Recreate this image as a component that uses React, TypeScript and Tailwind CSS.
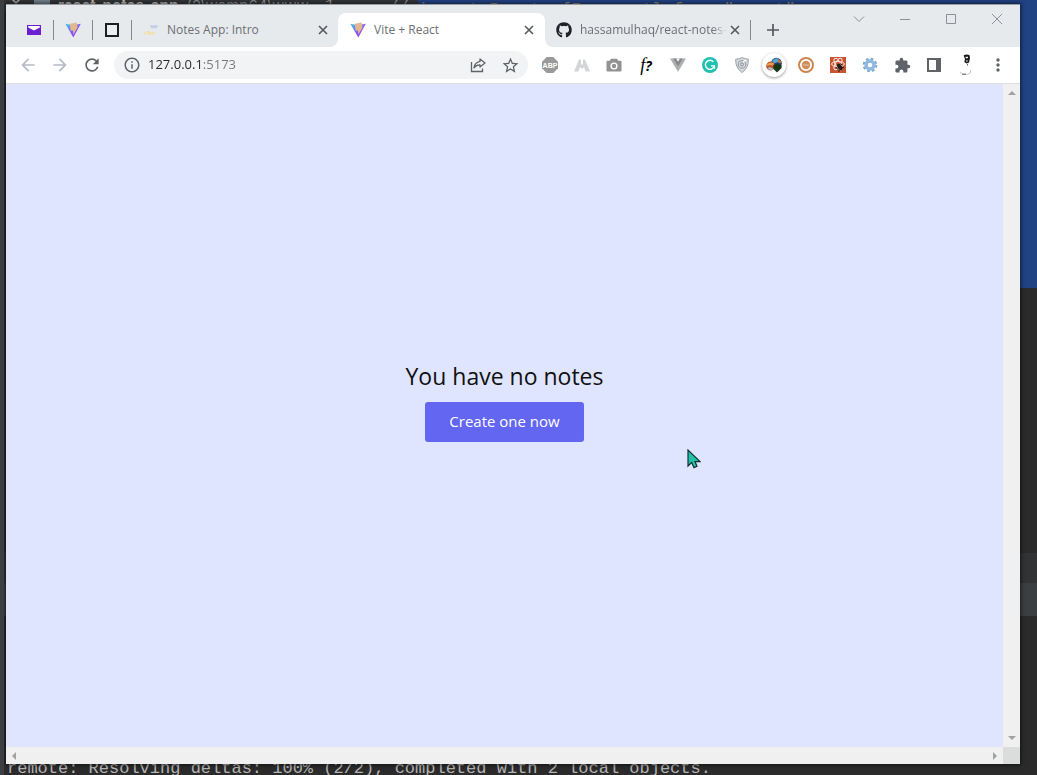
import type { ReactNode } from "react";
import { FaGithub } from "react-icons/fa";
import { MdExtension, MdMoreVert, MdRefresh, MdArrowBack, MdArrowForward, MdInfoOutline, MdStarBorder } from "react-icons/md";

function ViteLogo() {
  return (
    <svg viewBox="0 0 16 16" className="size-4 shrink-0" aria-hidden="true">
      <defs>
        <linearGradient id="viteBody" x1="0" y1="0" x2="1" y2="1">
          <stop offset="0" stopColor="#41c8f0" />
          <stop offset="0.6" stopColor="#8d4df5" />
          <stop offset="1" stopColor="#9b4ff5" />
        </linearGradient>
      </defs>
      <path d="M0.3 1.8 L8 3.2 L15.8 1.8 L8.3 15.4 Z" fill="url(#viteBody)" />
      <path d="M4.8 1.8 L11.6 0.4 L12.6 5.2 L8.4 12.6 L8 8.4 L5.6 8.4 Z" fill="#e3b98c" />
    </svg>
  );
}

function CloseButton({ label }: { label: string }) {
  return (
    <button type="button" aria-label={label} className="flex size-4 shrink-0 items-center justify-center text-[#55585c]">
      <svg viewBox="0 0 10 10" className="size-[10px]" fill="none" stroke="currentColor" strokeWidth="1.6">
        <path d="M1 1 9 9M9 1 1 9" />
      </svg>
    </button>
  );
}

function Pinned({ label, children }: { label: string; children: ReactNode }) {
  return (
    <button type="button" aria-label={label} className="flex h-5 w-[39px] shrink-0 items-center justify-center border-r border-[#85898d]">
      {children}
    </button>
  );
}

function ToolButton({ label, children }: { label: string; children: ReactNode }) {
  return (
    <button type="button" aria-label={label} className="flex h-7 w-8 shrink-0 items-center justify-center text-[#5f6368]">
      {children}
    </button>
  );
}

function TabStrip() {
  return (
    <div className="bg-[#e7eaed] pt-2">
      <div className="flex h-[34px] bg-white text-xs text-[#6b6f74]">
        <div className="flex w-[332px] shrink-0 items-center rounded-br-lg bg-[#e7eaed] pl-[9px]">
          <Pinned label="Mail">
            <svg viewBox="0 0 14 10" className="h-[10px] w-[14px]">
              <path d="M0 0H14V10H0Z" fill="#6a1fd0" />
              <path d="M1.2 1H12.8V2.4L7 5.4 1.2 2.4Z" fill="#fff" />
            </svg>
          </Pinned>
          <Pinned label="Vite">
            <ViteLogo />
          </Pinned>
          <Pinned label="Blank page">
            <span className="size-[14px] border-2 border-[#1d1f21] bg-[#eceef0]" />
          </Pinned>
          <div className="flex min-w-0 flex-1 items-center gap-2 pr-[7px] pl-[11px]">
            <svg viewBox="0 0 16 16" className="size-4 shrink-0" fill="none" aria-hidden="true">
              <path d="M7 4H15M8 5.5H14" stroke="#c3cee8" strokeWidth="1.4" />
              <path d="M0.5 11.5H3M4.5 11.5H12M3.5 10.2H7" stroke="#f1e0a8" strokeWidth="1.8" />
            </svg>
            <span className="min-w-0 flex-1 truncate">Notes App: Intro</span>
            <CloseButton label="Close Notes App: Intro" />
          </div>
        </div>

        <div className="w-[207px] shrink-0 bg-[#e7eaed]">
          <div className="flex h-full items-center gap-2 rounded-t-lg bg-white pr-2 pl-3">
            <ViteLogo />
            <span className="min-w-0 flex-1 truncate">Vite + React</span>
            <CloseButton label="Close Vite + React" />
          </div>
        </div>

        <div className="flex min-w-0 flex-1 items-center rounded-bl-lg bg-[#e7eaed]">
          <div className="flex h-5 w-[206px] shrink-0 items-center border-r border-[#85898d] pr-[7px] pl-[11px]">
            <FaGithub className="size-4 shrink-0 text-[#1f2328]" />
            <span className="ml-2 min-w-0 flex-1 overflow-hidden whitespace-nowrap [mask-image:linear-gradient(90deg,#000_90%,transparent)]">
              hassamulhaq/react-notes-a
            </span>
            <CloseButton label="Close hassamulhaq/react-notes-app" />
          </div>
          <button type="button" aria-label="New tab" className="ml-3 flex size-5 items-center justify-center text-[#55585c]">
            <svg viewBox="0 0 12 12" className="size-3" fill="none" stroke="currentColor" strokeWidth="1.7">
              <path d="M6 0V12M0 6H12" />
            </svg>
          </button>
          <div className="ml-auto flex self-start text-[#8d9094]">
            <button type="button" aria-label="Search tabs" className="flex h-3 w-[46px] items-center justify-center">
              <svg viewBox="0 0 12 12" className="size-3" fill="none" stroke="currentColor">
                <path d="M1 3.5 6 8.5 11 3.5" />
              </svg>
            </button>
            <button type="button" aria-label="Minimize" className="flex h-3 w-[46px] items-center justify-center">
              <svg viewBox="0 0 12 12" className="size-3" fill="none" stroke="currentColor">
                <path d="M1 6.5H11" />
              </svg>
            </button>
            <button type="button" aria-label="Maximize" className="flex h-3 w-[46px] items-center justify-center">
              <svg viewBox="0 0 12 12" className="size-3" fill="none" stroke="currentColor">
                <path d="M1.5 1.5H10.5V10.5H1.5Z" />
              </svg>
            </button>
            <button type="button" aria-label="Close window" className="flex h-3 w-[46px] items-center justify-center">
              <svg viewBox="0 0 12 12" className="size-3" fill="none" stroke="currentColor">
                <path d="M1 1 11 11M11 1 1 11" />
              </svg>
            </button>
          </div>
        </div>
      </div>
    </div>
  );
}

function Extensions() {
  return (
    <>
      <ToolButton label="Adblock Plus">
        <svg viewBox="0 0 16 16" className="size-4">
          <path d="M4.7 0H11.3L16 4.7V11.3L11.3 16H4.7L0 11.3V4.7Z" fill="#9a9a9a" />
          <text x="8" y="10.6" fontSize="7" fontWeight="700" textAnchor="middle" fill="#fff" fontFamily="Liberation Sans, sans-serif">ABP</text>
        </svg>
      </ToolButton>
      <ToolButton label="Peaks">
        <svg viewBox="0 0 16 16" className="size-4" fill="#d3d6d9">
          <path d="M0 14.5 5 2.5H7V7L4.4 14.5Z" />
          <path d="M16 14.5 11 2.5H9V7L11.6 14.5Z" />
          <path d="M6.6 6 8 8.2 9.4 6 10.6 9.4 8 12 5.4 9.4Z" />
        </svg>
      </ToolButton>
      <ToolButton label="Screenshot">
        <svg viewBox="0 0 16 16" className="size-4">
          <path d="M5 1.8H11L12.2 3.8H14.5Q15.5 3.8 15.5 4.8V13.4Q15.5 14.4 14.5 14.4H1.5Q0.5 14.4 0.5 13.4V4.8Q0.5 3.8 1.5 3.8H3.8Z" fill="#929292" />
          <circle cx="8" cy="9" r="3.6" fill="#fff" />
          <circle cx="8" cy="9" r="2.2" fill="#929292" />
        </svg>
      </ToolButton>
      <ToolButton label="WhatFont">
        <span className="font-['Liberation_Serif',serif] text-lg leading-5 font-medium text-black italic">
          f<span className="font-['Open_Sans',sans-serif] text-sm font-bold">?</span>
        </span>
      </ToolButton>
      <ToolButton label="Vue devtools">
        <svg viewBox="0 0 16 16" className="size-4">
          <path d="M0 1.5H16L8 15Z" fill="#adb0b2" />
          <path d="M3.2 1.5H12.8L8 9.6Z" fill="#858789" />
          <path d="M6.1 1.5H9.9L8 4.8Z" fill="#fff" />
        </svg>
      </ToolButton>
      <ToolButton label="Grammarly">
        <svg viewBox="0 0 16 16" className="size-4" fill="none">
          <circle cx="8" cy="8" r="8" fill="#22c0b0" />
          <path d="M11.4 4.9A4.5 4.5 0 1 0 12.3 8.8H9M12.4 8.4V11.8" stroke="#fff" strokeWidth="1.3" />
        </svg>
      </ToolButton>
      <ToolButton label="Shield">
        <svg viewBox="0 0 16 16" className="size-4" fill="none">
          <path d="M8 0.5Q11 2 14.3 2.2 14.8 11 8 15.5 1.2 11 1.7 2.2 5 2 8 0.5Z" fill="#d5d8dc" stroke="#a0a4aa" />
          <circle cx="8" cy="7.4" r="3.8" stroke="#a1a5ab" strokeWidth="1.2" />
          <circle cx="8" cy="7.4" r="1.5" stroke="#8e9399" />
          <path d="M9 5 12 3" stroke="#fff" strokeWidth="1.4" />
        </svg>
      </ToolButton>
      <ToolButton label="Download manager">
        <span className="flex size-6 shrink-0 items-center justify-center rounded-full bg-white shadow-[0_1px_3px_#0006]">
          <svg viewBox="0 0 16 16" className="size-4">
            <circle cx="10.4" cy="6.2" r="5.4" fill="#1d3f78" />
            <path d="M6 4Q8.6 0.6 12.5 1.6L12 5 8 6.5Z" fill="#58a5d0" />
            <path d="M12 2 15 4.2 14.8 6.6 12 5.6Z" fill="#c9743b" />
            <circle cx="4.6" cy="9" r="4.4" fill="#b84e22" />
            <path d="M1 7.4Q4 4.4 8 6.4L7 8.6Q4 7.6 1 9Z" fill="#ee9b55" />
            <path d="M1.3 11Q4.5 9 7.5 12L5 13.4Z" fill="#a9c7d6" />
            <path d="M7.5 8 11 6.8 15.6 8V11L11 15.6 7.5 12Z" fill="#163719" />
          </svg>
        </span>
      </ToolButton>
      <ToolButton label="Cookies">
        <svg viewBox="0 0 16 16" className="size-4" fill="none">
          <circle cx="8" cy="8" r="7" stroke="#cc8650" strokeWidth="2" />
          <circle cx="8" cy="8" r="4.2" fill="#ce8c59" />
          <path d="M5.2 8H10.8" stroke="#edcdb4" />
        </svg>
      </ToolButton>
      <ToolButton label="React developer tools">
        <svg viewBox="0 0 16 16" className="size-4" fill="none">
          <path d="M0 0H16V16H0Z" fill="#c85432" />
          <g stroke="#f8e4dc">
            <ellipse cx="8" cy="7" rx="6.4" ry="2.6" />
            <ellipse cx="8" cy="7" rx="6.4" ry="2.6" transform="rotate(60 8 7)" />
            <ellipse cx="8" cy="7" rx="6.4" ry="2.6" transform="rotate(120 8 7)" />
          </g>
          <ellipse cx="9.8" cy="10" rx="2.2" ry="3.6" fill="#241b19" transform="rotate(-35 9.8 10)" />
          <path d="M6 10 8 12.6M10 6.6 12.4 8M11.6 10.4H14M9 12.6V15" stroke="#241b19" />
        </svg>
      </ToolButton>
      <ToolButton label="Settings helper">
        <svg viewBox="0 0 16 16" className="size-4" fill="none">
          <circle cx="8" cy="8" r="6.2" stroke="#7ba6d0" strokeWidth="2.2" strokeDasharray="2.6 2.27" />
          <circle cx="8" cy="8" r="4" stroke="#8fb9e0" strokeWidth="3.4" />
        </svg>
      </ToolButton>
      <ToolButton label="Extensions">
        <MdExtension className="size-[17px]" />
      </ToolButton>
      <ToolButton label="Side panel">
        <svg viewBox="0 0 14 14" className="size-[14px]">
          <path d="M1 1H13V13H1Z" fill="#fff" stroke="#5f6368" strokeWidth="2" />
          <path d="M9 0H14V14H9Z" fill="#5f6368" />
        </svg>
      </ToolButton>
      <ToolButton label="Profile">
        <svg viewBox="0 0 16 22" className="h-[22px] w-4" fill="none">
          <path d="M5.6 1.5Q8-0.3 11.4 1L12 4 11 8.4 8.6 9.6 6.4 8 7 5Z" fill="#171717" />
          <path d="M7.4 2.8H10V4L8 4.6ZM8 6.4H10L9.6 7.4H8.2Z" fill="#fff" />
          <path d="M2 18Q4 20.6 9 20.6L12.5 19V16" stroke="#b5b5b5" strokeWidth="0.7" />
          <path d="M4 20.2H8M9.5 10V11.6" stroke="#444" strokeWidth="0.8" />
        </svg>
      </ToolButton>
      <ToolButton label="Menu">
        <MdMoreVert className="size-5" />
      </ToolButton>
    </>
  );
}

function Toolbar() {
  return (
    <div className="flex h-[37px] items-center border-b border-[#dcdde0] bg-white px-[6px]">
      <div className="flex text-[#5f6368]">
        <button type="button" aria-label="Back" className="flex h-7 w-8 items-center justify-center text-[#b4bac8]">
          <MdArrowBack className="size-5" />
        </button>
        <button type="button" aria-label="Forward" className="flex h-7 w-8 items-center justify-center text-[#b4bac8]">
          <MdArrowForward className="size-5" />
        </button>
        <ToolButton label="Reload">
          <MdRefresh className="size-5" />
        </ToolButton>
      </div>
      <div className="ml-[6px] flex h-7 min-w-0 flex-1 items-center rounded-full bg-[#f1f3f4] pr-[2px] pl-[9px] text-[#5f6368]">
        <MdInfoOutline className="size-[18px] shrink-0" />
        <input
          aria-label="Address"
          defaultValue="127.0.0.1:5173"
          className="ml-[7px] min-w-0 flex-1 bg-[linear-gradient(90deg,#27292d_54px,#74787d_54px)] bg-clip-text text-[13px] text-transparent outline-none"
        />
        <ToolButton label="Share">
          <svg viewBox="0 0 16 16" className="size-4" fill="none" stroke="currentColor" strokeWidth="1.3">
            <path d="M1.5 5V14.5H12.5V11.5" />
            <path d="M10 2 15 6 10 10V7.8Q6.5 7.6 4 10.8 4.6 5.6 10 4.4Z" strokeLinejoin="round" />
          </svg>
        </ToolButton>
        <ToolButton label="Bookmark">
          <MdStarBorder className="size-[19px]" />
        </ToolButton>
      </div>
      <div className="ml-[6px] flex">
        <Extensions />
      </div>
    </div>
  );
}

function Arrow({ d }: { d: string }) {
  return (
    <svg viewBox="0 0 8 8" className="size-2" fill="#a2a2a2" aria-hidden="true">
      <path d={d} />
    </svg>
  );
}

function Page() {
  return (
    <div className="flex min-h-0 flex-1 flex-col">
      <div className="flex min-h-0 flex-1">
        <main className="flex min-w-0 flex-1 flex-col items-center justify-center gap-[10px] bg-[#e0e5ff] pb-[30px]">
          <h1 className="text-[23px] leading-8 text-[#111]">You have no notes</h1>
          <button type="button" className="h-10 rounded-[3px] bg-[#6366f1] px-6 text-[15px] text-white">
            Create one now
          </button>
        </main>
        <div className="flex w-[17px] shrink-0 flex-col items-center justify-between bg-[#f0f0f0] py-[5px]">
          <Arrow d="M0 6 4 2 8 6Z" />
          <Arrow d="M0 2 4 6 8 2Z" />
        </div>
      </div>
      <div className="flex h-[17px] shrink-0">
        <div className="flex flex-1 items-center justify-between bg-[#f0f0f0] px-1">
          <Arrow d="M6 0 2 4 6 8Z" />
          <Arrow d="M2 0 6 4 2 8Z" />
        </div>
        <div className="w-[17px] bg-[#dadddc]" />
      </div>
    </div>
  );
}

function Desktop() {
  return (
    <div className="flex h-full flex-col justify-between font-['Liberation_Mono',monospace] text-[17px] leading-5 whitespace-pre">
      <div className="flex h-72 items-start bg-[#2b2b2b]">
        <div className="flex w-[414px] shrink-0 items-start bg-[#333537] pl-[6px] leading-3 text-[#8a8d90]">
          <svg viewBox="0 0 12 12" className="size-3 shrink-0" fill="none" stroke="#aaa" strokeWidth="1.5" aria-hidden="true">
            <path d="M1-2 6 3 11-2" />
          </svg>
          <span className="ml-3 h-3 w-4 shrink-0 bg-[#71808c]" />
          <span className="ml-2 flex gap-2 font-['Inter',sans-serif] text-[15px]">
            <b className="text-[#bbb]">react-notes-app</b>
            <span>(2\wamp64\www</span>
          </span>
          <span className="ml-4">1</span>
          <span className="ml-auto pr-2">//</span>
        </div>
        <div className="h-full flex-1 bg-[#214283] text-[#8e8c7d]">
          <span className="leading-4">import React, {"{Fragment}"} from "react";</span>
        </div>
      </div>
      <div className="flex flex-1 flex-col justify-end">
        <div className="h-[30px] bg-[#313335]" />
        <div className="h-[33px] bg-[#3c3f41]" />
        <div className="flex h-[159px] items-end bg-[#2b2b2b] pl-[3px] text-[#b5b5b5]">
          <span className="leading-3">remote: Resolving deltas: 100% (2/2), completed with 2 local objects.</span>
        </div>
      </div>
    </div>
  );
}

export default function App() {
  return (
    <div className="relative h-screen overflow-hidden border-l-4 border-[#3c3f41] bg-[#2b2b2b] font-['Open_Sans','Noto_Sans',sans-serif]">
      <Desktop />
      <section className="absolute top-1 right-[17px] bottom-[11px] left-[2px] flex flex-col border-t border-[#9b9ea1] bg-white shadow-[0_0_4px_1px_#0009]">
        <TabStrip />
        <Toolbar />
        <Page />
      </section>
      <svg viewBox="0 0 14 20" className="absolute top-[449px] left-[683px] h-5 w-[14px]" aria-hidden="true">
        <path d="M1 1V17L4.6 13.6 7 18.6 10 17.2 8 12.6H13Z" fill="#20c3a8" stroke="#16302f" strokeWidth="1.2" />
      </svg>
    </div>
  );
}
